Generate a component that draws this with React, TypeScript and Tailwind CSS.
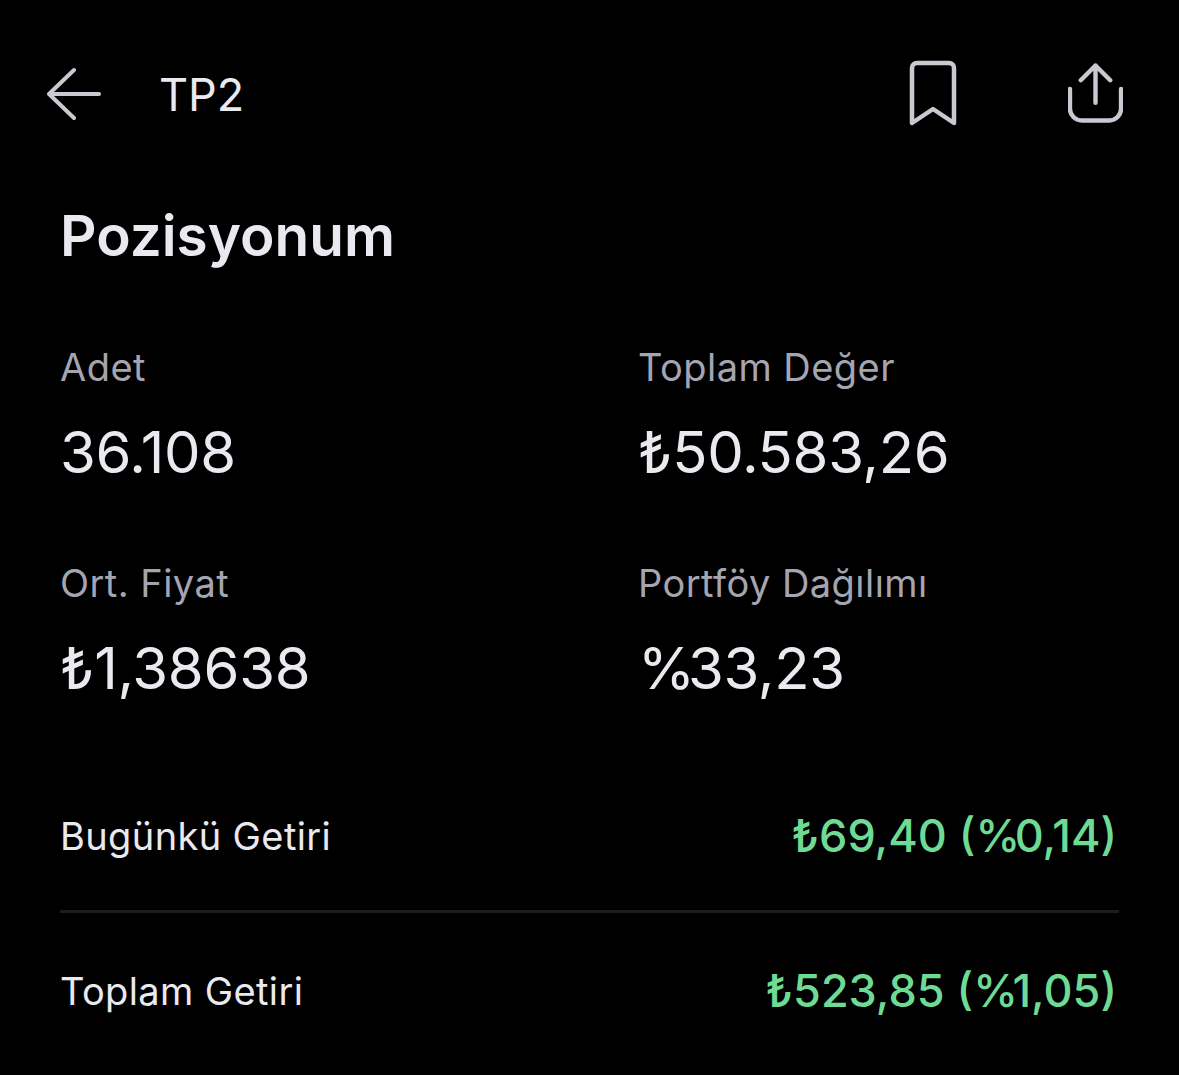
import type { ReactNode } from "react";

const Pct = () => <span className="tracking-[-0.12em]">%</span>;

const Stat = ({ label, value }: { label: string; value: ReactNode }) => (
	<div className="flex flex-col">
		<p className="text-[38px] leading-[44px] tracking-[0.012em] text-[#a5a5b1]">{label}</p>
		<p className="mt-[29px] text-[58px] leading-[68px] tracking-[-0.005em] text-[#e9e9ef]">{value}</p>
	</div>
);

const ReturnRow = ({ label, value }: { label: string; value: ReactNode }) => (
	<div className="flex items-center justify-between">
		<p className="text-[38px] leading-[44px] tracking-[0.01em] text-[#e9e9ef]">{label}</p>
		<p className="pr-[2px] text-[45px] leading-[54px] font-medium text-[#6edb94]">{value}</p>
	</div>
);

export default function App() {
	return (
		<div className="h-[1075px] w-[1179px] overflow-hidden bg-black font-['Inter',sans-serif]">
			<header className="flex h-[190px] items-center justify-between pl-[47px] pr-[56px]">
				<div className="flex items-center gap-[58px]">
					<svg width="54" height="54" viewBox="0 0 54 54" fill="none" stroke="#c9c9d1" strokeWidth="4" strokeLinecap="round" strokeLinejoin="round" className="mb-[2px]">
						<path d="M52 27H3M27 3 2 27l25 24" />
					</svg>
					<p className="text-[45px] leading-[52px] text-[#e9e9ef]">TP2</p>
				</div>
				<div className="mb-[4px] flex items-center gap-[111px]">
					<svg width="48" height="66" viewBox="0 0 48 66" fill="none" stroke="#c9c9d1" strokeWidth="4.5" strokeLinecap="round" strokeLinejoin="round">
						<path d="M3 63V8a5 5 0 0 1 5-5h32a5 5 0 0 1 5 5v55L24 49 3 63Z" />
					</svg>
					<svg width="55" height="62" viewBox="0 0 56 62" fill="none" stroke="#c9c9d1" strokeWidth="4.5" strokeLinecap="round" strokeLinejoin="round">
						<path d="M28 41V3M13 18 28 3l15 15M2 27v20a12 12 0 0 0 12 12h28a12 12 0 0 0 12-12V27" />
					</svg>
				</div>
			</header>
			<main className="px-[60px]">
				<h1 className="mt-[12px] text-[56.7px] leading-[68px] font-semibold text-[#e9e9ef]">Pozisyonum</h1>
				<div className="mt-[75px] grid grid-cols-[578px_1fr] gap-y-[75px]">
					<Stat label="Adet" value="36.108" />
					<Stat label="Toplam Değer" value="₺50.583,26" />
					<Stat label="Ort. Fiyat" value="₺1,38638" />
					<Stat label="Portföy Dağılımı" value={<><Pct />33,23</>} />
				</div>
				<div className="mt-[107px] flex flex-col">
					<ReturnRow label="Bugünkü Getiri" value={<>₺69,40 (<Pct />0,14)</>} />
					<div className="mt-[47px] mb-[51px] h-[3px] bg-[#1c1c24]" />
					<ReturnRow label="Toplam Getiri" value={<>₺523,85 (<Pct />1,05)</>} />
				</div>
			</main>
		</div>
	);
}
